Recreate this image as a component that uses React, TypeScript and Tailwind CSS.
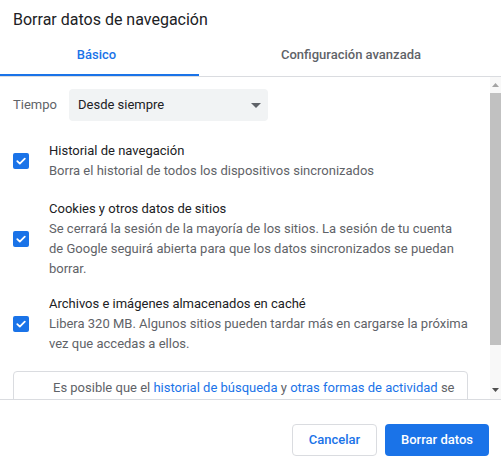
import React from "react";

const Checkbox = () => (
  <div className="w-[16px] h-[16px] rounded-[2px] bg-[#1a73e8] flex items-center justify-center shrink-0">
    <svg width="12" height="12" viewBox="0 0 12 12" fill="none">
      <path d="M2.3 6.2 L4.8 8.6 L9.8 3.6" stroke="white" strokeWidth="1.8" strokeLinecap="round" strokeLinejoin="round" />
    </svg>
  </div>
);

const Item = ({ title, lines, className }: { title: string; lines: string[]; className?: string }) => (
  <div className={"flex items-center " + (className ?? "")}>
    <Checkbox />
    <div className="ml-[20px] text-[13px] leading-[20px] whitespace-nowrap">
      <div className="text-[#202124]">{title}</div>
      {lines.map((l) => (
        <div key={l} className="text-[#5f6368]">
          {l}
        </div>
      ))}
    </div>
  </div>
);

export default function App() {
  return (
    <div
      className="w-[501px] h-[470px] bg-white flex flex-col overflow-hidden"
      style={{ fontFamily: "Roboto, 'Liberation Sans', sans-serif" }}
    >
      <div className="h-[34px] pt-[10px] pl-[13px] text-[16px] leading-[20px] text-[#202124]">
        Borrar datos de navegación
      </div>

      <div className="flex h-[43px] border-b border-[#dadce0] text-[13px] font-medium">
        <div className="w-[199px] flex flex-col">
          <div className="flex-1 flex items-center justify-center pt-[2px] pr-[6px] text-[#1a73e8]">Básico</div>
          <div className="h-[2px] bg-[#1a73e8]" />
        </div>
        <div className="flex-1 flex flex-col">
          <div className="flex-1 flex items-center justify-center pt-[2px] pl-[2px] text-[#5f6368]">Configuración avanzada</div>
          <div className="h-[2px]" />
        </div>
      </div>

      <div className="flex h-[322px] overflow-hidden">
        <div className="flex-1 pl-[13px] pr-[22px] pt-[12px]">
          <div className="flex items-center">
            <span className="w-[56px] text-[13px] text-[#5f6368]">Tiempo</span>
            <div className="w-[199px] h-[32px] rounded-[4px] bg-[#f1f3f4] flex items-center justify-between pl-[9px] pr-[7px]">
              <span className="text-[13px] text-[#202124]">Desde siempre</span>
              <svg width="10" height="5" viewBox="0 0 10 5">
                <path d="M0 0 L10 0 L5 5 Z" fill="#5f6368" />
              </svg>
            </div>
          </div>

          <Item
            className="mt-[20px]"
            title="Historial de navegación"
            lines={["Borra el historial de todos los dispositivos sincronizados"]}
          />
          <Item
            className="mt-[18px]"
            title="Cookies y otros datos de sitios"
            lines={[
              "Se cerrará la sesión de la mayoría de los sitios. La sesión de tu cuenta",
              "de Google seguirá abierta para que los datos sincronizados se puedan",
              "borrar.",
            ]}
          />
          <Item
            className="mt-[15px]"
            title="Archivos e imágenes almacenados en caché"
            lines={[
              "Libera 320 MB. Algunos sitios pueden tardar más en cargarse la próxima",
              "vez que accedas a ellos.",
            ]}
          />

          <div className="mt-[17px] h-[40px] border border-[#dadce0] rounded-[4px] pt-[6px] pl-[39px] text-[13px] leading-[20px] text-[#5f6368] whitespace-nowrap">
            Es posible que el <span className="text-[#1a73e8]">historial de búsqueda</span> y{" "}
            <span className="text-[#1a73e8]">otras formas de actividad</span> se
          </div>
        </div>

        <div className="w-[12px] flex flex-col items-center bg-[#f8f8f8]">
          <div className="h-[16px] flex items-center justify-center">
            <svg width="7" height="4" viewBox="0 0 7 4">
              <path d="M0 4 L7 4 L3.5 0 Z" fill="#a3a3a3" />
            </svg>
          </div>
          <div className="w-full h-[252px] bg-[#c1c1c1]" />
          <div className="flex-1" />
          <div className="h-[18px] flex items-center justify-center">
            <svg width="7" height="4" viewBox="0 0 7 4">
              <path d="M0 0 L7 0 L3.5 4 Z" fill="#505050" />
            </svg>
          </div>
        </div>
      </div>

      <div className="flex-1 border-t border-[#dadce0] flex justify-end items-start pt-[24px] pr-[12px] gap-[8px]">
        <button className="w-[85px] h-[32px] rounded-[4px] border border-[#dadce0] bg-white text-[13px] font-medium text-[#1a73e8]">
          Cancelar
        </button>
        <button className="w-[104px] h-[32px] rounded-[4px] bg-[#1a73e8] text-[13px] font-medium text-white">
          Borrar datos
        </button>
      </div>
    </div>
  );
}
